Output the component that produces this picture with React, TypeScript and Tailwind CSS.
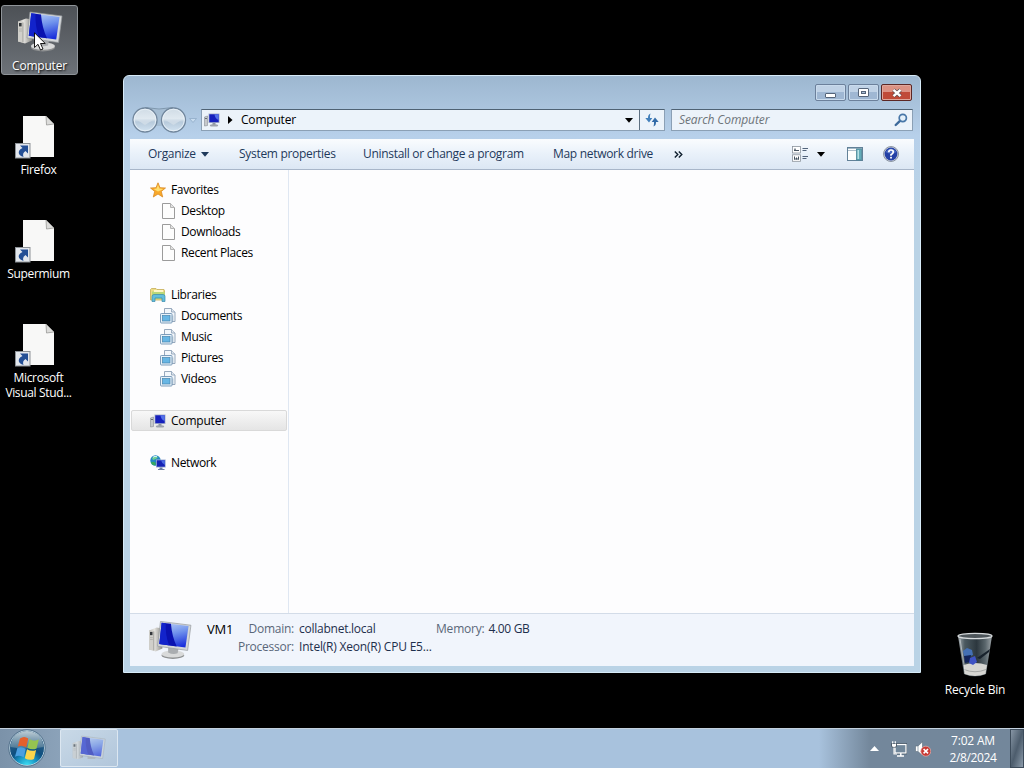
import React from "react";
import clsx from "clsx";

type IconProps = { className?: string };

function ComputerLarge({ className }: IconProps) {
  return (
    <svg viewBox="0 0 46 42" className={className}>
      <defs>
        <linearGradient id="sheen" x1=".3" y1="0" x2=".6" y2="1">
          <stop offset="0" stopColor="#b4cbf6" />
          <stop offset=".45" stopColor="#6f92ec" />
          <stop offset="1" stopColor="#1a2fdc" />
        </linearGradient>
        <linearGradient id="tower" x1="0" y1="0" x2="1" y2="0">
          <stop offset="0" stopColor="#b9b8b2" />
          <stop offset=".4" stopColor="#e4e3df" />
          <stop offset="1" stopColor="#8c8c88" />
        </linearGradient>
      </defs>
      <path d="M1 11 L9 8 L15 9 L15 30 L8 33 L1 31 Z" fill="url(#tower)" />
      <path d="M1 11 L6 12 L6 32 L1 31 Z" fill="#d0cfca" />
      <path d="M6 12 L6 32" stroke="#8b8b87" strokeWidth=".7" />
      <rect x="2" y="12.5" width="2.6" height="3.4" fill="#33373b" />
      <path d="M2 18.5h3M2 20.5h3" stroke="#a5a49f" strokeWidth=".7" />
      <ellipse cx="26" cy="37" rx="12" ry="3.9" fill="#8f9192" />
      <ellipse cx="26" cy="35.6" rx="12" ry="3.7" fill="#d9dada" />
      <path d="M21 28 L32 30 L31 35 Q26 37 21 34 Z" fill="#aaadb0" />
      <path d="M13 1.5 L45 5.5 L41.5 32 L10 27.5 Z" fill="#d4d7d9" stroke="#92979b" strokeWidth=".7" />
      <path d="M14.200 2.800 L42.500 6.400 L39.200 29 L11.800 25.200 Z" fill="url(#sheen)" />
      <path d="M14.200 2.800 L24 4 Q25 17 30 27.700 L11.800 25.200 Z" fill="#0a12b0" />
      <path d="M14.200 2.800 L18.500 3.300 Q18 16 22 26.600 L11.800 25.200 Z" fill="#1428d2" opacity=".8" />
    </svg>
  );
}

function ComputerSmall({ className }: IconProps) {
  return (
    <svg viewBox="0 0 16 16" className={className}>
      <path d="M.5 5 L3.5 4 V13.5 L.5 14 Z" fill="#c5c8cc" stroke="#888e96" strokeWidth=".6" />
      <path d="M1 6.5h2" stroke="#4d545c" strokeWidth=".8" />
      <rect x="4.5" y="1.5" width="11" height="9.5" fill="#a9b3ca" />
      <rect x="5.300" y="2.300" width="9.400" height="7.900" fill="#1620bd" />
      <path d="M10.500 2.300 H14.700 V8 Q11 7 10.500 2.300" fill="#5371e8" />
      <rect x="8.5" y="11" width="3" height="2" fill="#8e96a1" />
      <ellipse cx="10" cy="13.4" rx="4.2" ry="1.2" fill="#9da3ac" />
    </svg>
  );
}

function ShortcutFile() {
  return (
    <svg viewBox="0 0 40 44" className="h-[44px] w-[40px]">
      <path d="M8 1 H31 L39 9 V42 H8 Z" fill="#f8f8f7" />
      <path d="M31 1 L39 9 L31.500 10 Z" fill="#dcdcda" stroke="#8f8f8d" strokeWidth=".7" />
      <rect x=".5" y="28.5" width="14.5" height="14.5" fill="#e3e7ed" stroke="#8d9297" />
      <path d="M5 30.5 H13 V38.5 L10.5 36 Q7 38 8.5 42 Q2.5 40 4 36 Q5 33.800 7.500 33 Z" fill="#244f95" />
    </svg>
  );
}

function PageIcon() {
  return (
    <svg viewBox="0 0 16 16" className="h-4 w-4">
      <path d="M2.500 .5 H10.500 L14.500 4.500 V15.500 H2.500 Z" fill="#fdfdfd" stroke="#9b9b9b" />
      <path d="M10.500 .5 V4.500 H14.500" fill="#e2e2e2" stroke="#b4b4b4" />
    </svg>
  );
}

function LibraryItemIcon() {
  return (
    <svg viewBox="0 0 16 16" className="h-4 w-4">
      <path d="M4.500 .5 H11.500 L15 4 V13.500 H4.500 Z" fill="#f3f7fb" stroke="#8c9fb6" strokeWidth=".9" />
      <path d="M11.500 .5 V4 H15" fill="#dfe7ef" stroke="#8c9fb6" strokeWidth=".8" />
      <path d="M12.800 7.500 V13" stroke="#a9bed1" />
      <rect x=".5" y="5.500" width="11.500" height="9.500" rx=".8" fill="#e9f2f9" stroke="#6f93b3" strokeWidth=".9" />
      <rect x="2.500" y="7.500" width="7.500" height="5.500" fill="#67b6e4" stroke="#4685ae" strokeWidth=".7" />
    </svg>
  );
}

function StarIcon() {
  return (
    <svg viewBox="0 0 16 16" className="h-4 w-4">
      <path
        d="M8 .8 L10 5.700 L15.500 6 L11.300 9.400 L12.700 15 L8 12 L3.300 15 L4.700 9.400 L.5 6 L6 5.700 Z"
        fill="#f9a92a"
        stroke="#d98a25"
        strokeWidth=".8"
      />
      <path d="M8 2.500 L9.300 6.500 L13.500 7 L8 9.500 L3.500 7 L6.700 6.500 Z" fill="#ffdf70" />
    </svg>
  );
}

function LibrariesIcon() {
  return (
    <svg viewBox="0 0 16 16" className="h-4 w-4">
      <path d="M.5 2.500 L1.500 1.500 H6 L7 2.500 H14 L14.500 3.500 V13 H.5 Z" fill="#eddc86" stroke="#c5ad58" strokeWidth=".8" />
      <path d="M2 4.500 H11 L15 5.500 V12 H2 Z" fill="#b9d779" />
      <path d="M4 3 H13 V5 H4 Z" fill="#fff6c7" />
      <path d="M2 14.500 V9.500 Q2 7.500 4 7.500 H13 Q15 7.500 15 9.500 V14.500 H12 V11 H5 V14.500 Z" fill="#62bddb" stroke="#398aac" strokeWidth=".7" />
    </svg>
  );
}

function NetworkIcon() {
  return (
    <svg viewBox="0 0 16 16" className="h-4 w-4">
      <circle cx="5.500" cy="5.500" r="5.200" fill="#2488c4" />
      <path d="M2 3 Q5 0 8 2 Q6 5 3 5 Z" fill="#6fcf90" />
      <path d="M2 7 Q5 6 6 9 L5 10.500 Q1 10 1 7 Z" fill="#37a862" />
      <path d="M3 2.200 Q5 .8 7 1.700" stroke="#d9f4fa" fill="none" />
      <rect x="6" y="4.500" width="9.700" height="8" fill="#9fb0d4" />
      <rect x="6.800" y="5.300" width="8.100" height="6.400" fill="#1523b5" />
      <path d="M11 5.300 H14.900 V10 Q12 9 11 5.300" fill="#4a6ae2" />
      <path d="M9.500 12.500 H12.500 V14 H14.500 V15 H8 V14 H9.500 Z" fill="#6c80a5" />
    </svg>
  );
}

function Caret({ className }: IconProps) {
  return (
    <svg viewBox="0 0 8 5" className={clsx("h-[5px] w-2", className)}>
      <path d="M0 0 H8 L4 4.800 Z" fill="currentColor" />
    </svg>
  );
}

function NavButtons() {
  return (
    <svg viewBox="0 0 66 28" className="h-7 w-[66px]">
      <defs>
        <linearGradient id="navBtn" x1="0" y1="0" x2="0" y2="1">
          <stop offset="0" stopColor="#cfdbe5" />
          <stop offset=".45" stopColor="#e0e9f0" />
          <stop offset=".58" stopColor="#b7cadb" />
          <stop offset="1" stopColor="#d3e4f2" />
        </linearGradient>
      </defs>
      <path d="M13 1.500 Q27 5 41 1.500 L48 22 Q41 26 34 20 H20 Q13 26 6 22 Z" fill="#a5bdd3" />
      <path d="M13 1.500 Q27 4.500 41 1.500" fill="none" stroke="#8098ae" />
      <circle cx="13" cy="14" r="12" fill="url(#navBtn)" stroke="#71869c" strokeWidth="1.300" />
      <circle cx="13" cy="14" r="10.800" fill="none" stroke="#e9f1f7" strokeWidth=".9" />
      <circle cx="41.500" cy="14" r="12" fill="url(#navBtn)" stroke="#71869c" strokeWidth="1.300" />
      <circle cx="41.500" cy="14" r="10.800" fill="none" stroke="#e9f1f7" strokeWidth=".9" />
      <path d="M5 14 H21 L13 19 Z" fill="#d3dfe9" opacity=".8" />
      <path d="M33.500 14 H49.500 L41.500 19 Z" fill="#d3dfe9" opacity=".8" />
      <path d="M57.500 12.500 H64.500 L61 16.500 Z" fill="#c8dcef" stroke="#8fabc7" strokeWidth=".8" />
    </svg>
  );
}

function RefreshIcon() {
  return (
    <svg viewBox="0 0 14 14" className="h-[14px] w-[14px]">
      <path d="M5.500 .5 Q2.800 1.500 3 5 H.3 L4 9.500 L7.300 5 H5 Q4.800 2.500 5.500 .5 Z" fill="#4380bb" />
      <path d="M8.500 13.500 Q11.200 12.500 11 9 H13.700 L10 4.500 L6.700 9 H9 Q9.200 11.500 8.500 13.500 Z" fill="#326ba8" />
    </svg>
  );
}

function SearchIcon() {
  return (
    <svg viewBox="0 0 14 14" className="h-[14px] w-[14px]">
      <path d="M1.700 12 L6 7.800" stroke="#3d6a9b" strokeWidth="2.400" strokeLinecap="round" />
      <circle cx="8.800" cy="5" r="3.600" fill="#e4f0fa" stroke="#4877a8" strokeWidth="1.700" />
    </svg>
  );
}

function ViewIcon() {
  return (
    <svg viewBox="0 0 16 16" className="h-4 w-4">
      <rect x=".5" y=".5" width="8" height="6.500" fill="#fff" stroke="#8c939c" strokeWidth=".8" />
      <rect x=".5" y="8.800" width="8" height="6.500" fill="#fff" stroke="#8c939c" strokeWidth=".8" />
      <path d="M2 4.500 H7 M2 3.200 H4" stroke="#43505e" />
      <path d="M2.500 10.500 V13.500 M4.500 11.500 V13.500 M6.500 10.500 V13.500 M2 13 H7" stroke="#43505e" />
      <path d="M10.500 2.500 H16 M10.500 4.500 H14.500 M10.500 10.500 H16 M10.500 12.500 H14.500" stroke="#52637a" />
    </svg>
  );
}

function PreviewIcon() {
  return (
    <svg viewBox="0 0 16 14" className="h-[14px] w-4">
      <rect x=".5" y=".5" width="15" height="13" fill="#fdfefe" stroke="#628198" />
      <path d="M1 1.500 H15" stroke="#a5bac8" />
      <path d="M1 3.500 H9" stroke="#8ca4b6" strokeWidth=".7" />
      <rect x="9.500" y="2" width="5" height="11" fill="#63abb9" stroke="#4a8597" strokeWidth=".8" />
      <rect x="10.500" y="3" width="1.500" height="9" fill="#b8e2e6" />
    </svg>
  );
}

function HelpIcon() {
  return (
    <svg viewBox="0 0 16 16" className="h-4 w-4">
      <circle cx="8" cy="8" r="7.500" fill="#cdd3de" stroke="#76808f" strokeWidth=".8" />
      <circle cx="8" cy="8" r="6.400" fill="#2440a5" />
      <path d="M2.500 6 Q8 -1 13.500 6 Q8 9 2.500 6" fill="#6b8cda" opacity=".6" />
      <path d="M5.800 6.200 Q5.800 4 8 4 Q10.300 4 10.300 6 Q10.300 7.200 8 8.800 V9.800" fill="none" stroke="#fff" strokeWidth="1.700" />
      <rect x="7.100" y="10.800" width="1.800" height="1.700" fill="#fff" />
    </svg>
  );
}

function StartOrb() {
  return (
    <svg viewBox="0 0 40 38" className="h-[38px] w-10">
      <defs>
        <radialGradient id="orb" cx=".5" cy="1" r=".95">
          <stop offset="0" stopColor="#3fe0f4" />
          <stop offset=".3" stopColor="#1793c2" />
          <stop offset=".52" stopColor="#0d4f80" />
          <stop offset="1" stopColor="#3d6587" />
        </radialGradient>
        <linearGradient id="orbTop" x1="0" y1="0" x2="0" y2="1">
          <stop offset="0" stopColor="#ccd9df" stopOpacity=".9" />
          <stop offset="1" stopColor="#6d91a6" stopOpacity=".6" />
        </linearGradient>
      </defs>
      <circle cx="20" cy="19" r="17.500" fill="url(#orb)" stroke="#c3dbe8" strokeWidth="1" />
      <circle cx="20" cy="19" r="18.200" fill="none" stroke="#40617d" strokeWidth=".7" />
      <path d="M3.500 18 Q5 3 20 2 Q35 3 36.500 18 Q20 21 3.500 18 Z" fill="url(#orbTop)" />
      <path d="M13 9.500 Q17 6.500 21.300 9.500 L19.200 18.300 Q15 15.500 10.800 17.500 Z" fill="#e5602c" />
      <path d="M22.500 10 Q27 13 31.800 10.500 L29.500 19.500 Q25 21.500 20.400 18.800 Z" fill="#95c350" />
      <path d="M10.400 19 Q14.500 17 18.800 19.800 L16.700 28.300 Q12.500 25.500 8 27.800 Z" fill="#4b9fe0" />
      <path d="M20 20.300 Q24.500 23 29.100 21 L27 30 Q22.500 32 17.800 29.300 Z" fill="#fbd54c" />
    </svg>
  );
}

function RecycleBinIcon() {
  return (
    <svg viewBox="0 0 40 48" className="h-12 w-10">
      <defs>
        <linearGradient id="bin" x1="0" y1="0" x2="1" y2="0">
          <stop offset="0" stopColor="#a4abaf" />
          <stop offset=".2" stopColor="#4b5960" />
          <stop offset=".55" stopColor="#2c373e" />
          <stop offset=".8" stopColor="#59656b" />
          <stop offset="1" stopColor="#9ca3a7" />
        </linearGradient>
      </defs>
      <path d="M3 5 L9 43 Q20 48 31 43 L37 5 Z" fill="url(#bin)" />
      <path d="M8.500 34 Q20 30 32 34 L30.500 43 Q20 47 9.500 43 Z" fill="#d6d6d2" />
      <path d="M9 38.500 Q20 43 31 38.500" fill="none" stroke="#a5a7a5" />
      <path d="M8 20 L12 17 L17 19 L18 24 L13 26 L9 25 Z" fill="#4470b4" />
      <path d="M9 25 L16 24 L15 31 L10 32 Z" fill="#13245a" />
      <path d="M15 27 L20 25 L22 31 L18 34 L14 32 Z" fill="#3f53c4" />
      <path d="M22 27 L35 18 L34 21 L25 28 Z" fill="#18222c" />
      <ellipse cx="20" cy="5" rx="17" ry="2.600" fill="#4e565b" stroke="#d7dbdd" strokeWidth="1.300" />
      <path d="M5 8 L10 40" stroke="#dfe3e5" strokeWidth=".8" opacity=".7" />
    </svg>
  );
}

function TrayNetworkIcon() {
  return (
    <svg viewBox="0 0 16 16" className="h-4 w-4">
      <rect x="4" y="3.500" width="11" height="8.500" fill="#5f7488" stroke="#273746" strokeWidth="2.400" />
      <rect x="4" y="3.500" width="11" height="8.500" fill="#71879a" stroke="#fff" strokeWidth="1.300" />
      <path d="M6 15 H13 M9.800 12 V15" stroke="#fff" strokeWidth="1.500" />
      <path d="M.5 2.500 H5.500 V5 Q5.500 6.500 3 6.500 Q.5 6.500 .5 5 Z" fill="#fff" stroke="#2d3e4e" strokeWidth=".8" />
      <path d="M1.700 2.500 V.3 M4.300 2.500 V.3 M3 6.500 V13 H6" stroke="#fff" fill="none" strokeWidth="1.200" />
    </svg>
  );
}

function TrayVolumeIcon() {
  return (
    <svg viewBox="0 0 16 16" className="h-4 w-4">
      <path d="M.5 5 H3 L7.500 .8 V14.500 L3 10.500 H.5 Z" fill="#fff" stroke="#5b6b7b" strokeWidth=".6" />
      <path d="M3 5 V10.500" stroke="#8795a2" strokeWidth=".8" />
      <circle cx="10.800" cy="10.200" r="5" fill="#c93a34" stroke="#e7b6b2" strokeWidth=".7" />
      <path d="M8.600 8 L13 12.400 M13 8 L8.600 12.400" stroke="#fff" strokeWidth="1.600" />
    </svg>
  );
}

const shortcuts = [["Firefox"], ["Supermium"], ["Microsoft", "Visual Stud..."]];

const favorites = ["Desktop", "Downloads", "Recent Places"];
const libraries = ["Documents", "Music", "Pictures", "Videos"];

const commands = [
  { label: "System properties", className: "w-[124px]" },
  { label: "Uninstall or change a program", className: "w-[190px]" },
  { label: "Map network drive", className: "w-[121px]" },
];

function DesktopIcons() {
  return (
    <div className="flex w-[78px] flex-col pt-[5px] pl-px text-center text-white">
      <div className="relative mb-[34px] flex h-[70px] flex-col items-center rounded-[3px] border border-[#8f9499] bg-gradient-to-b from-[#4d5156] to-[#6d7278] pt-[4px]">
        <ComputerLarge className="h-[43px] w-[46px]" />
        <span className="mt-[5px] leading-[15px] [text-shadow:1px_1px_2px_#000]">Computer</span>
        <svg viewBox="0 0 12 19" className="absolute top-[26px] left-[32px] h-[19px] w-3">
          <path
            d="M.5 .8 V15.500 L4 12.300 L6.500 18 L9 17 L6.500 11.500 H11.300 Z"
            fill="#fff"
            stroke="#000"
            strokeWidth=".9"
          />
        </svg>
      </div>
      {shortcuts.map((lines) => (
        <div key={lines[0]} className="flex h-[104px] flex-col pt-[6px]">
          <div className="pl-[14px]">
            <ShortcutFile />
          </div>
          <div className="mt-[3px] -mr-1 -ml-1.5 leading-[15px] tracking-[-0.35px] whitespace-nowrap">
            {lines.map((line) => (
              <div key={line}>{line}</div>
            ))}
          </div>
        </div>
      ))}
    </div>
  );
}

function CaptionButtons() {
  return (
    <div className="flex gap-[2px]">
      <button className="flex h-[17px] w-[31px] items-center justify-center rounded-[2px] border border-[#6c809b] bg-gradient-to-b from-[#c0d2e6] from-50% to-[#9fb7d3] to-50% ring-1 ring-[#c9dbed] ring-inset">
        <span className="mt-[5px] h-[5px] w-[11px] rounded-[1px] border border-[#56657a] bg-white" />
      </button>
      <button className="flex h-[17px] w-[31px] items-center justify-center rounded-[2px] border border-[#6c809b] bg-gradient-to-b from-[#c0d2e6] from-50% to-[#9fb7d3] to-50% ring-1 ring-[#c9dbed] ring-inset">
        <span className="flex h-[9px] w-[11px] items-center justify-center rounded-[1px] border border-[#56657a] bg-white">
          <span className="h-[3px] w-[5px] border border-[#56657a] bg-[#a9bfd9]" />
        </span>
      </button>
      <button className="flex h-[17px] w-[31px] items-center justify-center rounded-[2px] border border-[#5c2725] bg-gradient-to-b from-[#dc9284] from-50% to-[#c04a38] to-50% ring-1 ring-[#dfa79c] ring-inset">
        <svg viewBox="0 0 12 10" className="h-[10px] w-3">
          <path d="M2.500 1.800 L9.500 8.200 M9.500 1.800 L2.500 8.200" stroke="#5b4a50" strokeWidth="3.800" />
          <path d="M2.500 1.800 L9.500 8.200 M9.500 1.800 L2.500 8.200" stroke="#fff" strokeWidth="2.500" />
        </svg>
      </button>
    </div>
  );
}

function NavHeader({ icon, label }: { icon: React.ReactNode; label: string }) {
  return (
    <div className="flex h-[21px] items-center gap-[5px] pl-[20px]">
      {icon}
      <span>{label}</span>
    </div>
  );
}

function NavItem({ icon, label }: { icon: React.ReactNode; label: string }) {
  return (
    <div className="flex h-[21px] items-center gap-[5px] pl-[30px]">
      {icon}
      <span>{label}</span>
    </div>
  );
}

function NavigationPane() {
  return (
    <nav className="w-[159px] shrink-0 border-r border-[#dfe7f2] pt-[9px] tracking-[-0.35px]">
      <NavHeader icon={<StarIcon />} label="Favorites" />
      {favorites.map((name) => (
        <NavItem key={name} icon={<PageIcon />} label={name} />
      ))}
      <div className="mt-[21px]">
        <NavHeader icon={<LibrariesIcon />} label="Libraries" />
        {libraries.map((name) => (
          <NavItem key={name} icon={<LibraryItemIcon />} label={name} />
        ))}
      </div>
      <div className="mt-[21px] mr-px ml-px flex h-[21px] items-center gap-[5px] rounded-[2px] border border-[#d9d9d9] bg-gradient-to-b from-[#f8f8f8] to-[#e5e5e5] pl-[18px] tracking-[-0.2px]">
        <ComputerSmall className="h-4 w-4" />
        <span>Computer</span>
      </div>
      <div className="mt-[21px]">
        <NavHeader icon={<NetworkIcon />} label="Network" />
      </div>
    </nav>
  );
}

function ExplorerWindow() {
  return (
    <div className="absolute top-[75px] left-[123px] flex h-[598px] w-[798px] flex-col rounded-t-[6px] border border-[#d7ebf8] bg-gradient-to-b from-[#9db7d0] via-[#b7d0ea] via-[60px] to-[#bad3e6] to-[130px] px-[6px] pb-[6px]">
      <div className="flex h-[30px] justify-end pt-[8px] pr-[2px]">
        <CaptionButtons />
      </div>
      <div className="flex h-[33px] items-start pl-[2px]">
        <NavButtons />
        <div className="mt-[3px] ml-[3px] flex h-[22px] w-[464px] border border-[#8ba0b5] border-t-[#4f6274] bg-[#ecf3fa]">
          <div className="flex flex-1 items-center pl-[2px]">
            <ComputerSmall className="h-4 w-4" />
            <svg viewBox="0 0 5 8" className="ml-[8px] h-2 w-[5px]">
              <path d="M0 0 L4.500 4 L0 8 Z" fill="#000" />
            </svg>
            <span className="ml-[8px]">Computer</span>
            <Caret className="mr-[6px] ml-auto" />
          </div>
          <div className="flex w-[25px] items-center justify-center border-l border-[#5d7082]">
            <RefreshIcon />
          </div>
        </div>
        <div className="mt-[3px] ml-[6px] flex h-[22px] w-[242px] items-center justify-between border border-[#8ba0b5] border-t-[#4f6274] bg-[#ecf3fa] pr-[4px] pl-[7px]">
          <span className="tracking-[-0.1px] text-[#6d7479] italic">Search Computer</span>
          <SearchIcon />
        </div>
      </div>

      <div className="flex min-h-0 flex-1 flex-col">
        <div className="flex h-[31px] shrink-0 items-center border-b border-[#a8b6c9] bg-gradient-to-b from-[#fafcfe] via-[#e9f1fa] via-50% to-[#dce7f4] pl-[18px] tracking-[-0.3px] text-[#1e395b]">
          <div className="flex w-[91px] items-center gap-[5px]">
            <span>Organize</span>
            <Caret />
          </div>
          {commands.map((command) => (
            <div key={command.label} className={clsx("shrink-0 whitespace-nowrap", command.className)}>
              {command.label}
            </div>
          ))}
          <svg viewBox="0 0 9 7" className="h-[7px] w-[9px] text-[#10202f]">
            <path d="M.8 .5 L3.800 3.500 L.8 6.500 M4.800 .5 L7.800 3.500 L4.800 6.500" fill="none" stroke="currentColor" strokeWidth="1.400" />
          </svg>
          <div className="ml-auto flex items-center pr-[15px]">
            <ViewIcon />
            <Caret className="ml-[9px] text-black" />
            <span className="ml-[22px]">
              <PreviewIcon />
            </span>
            <span className="ml-[20px]">
              <HelpIcon />
            </span>
          </div>
        </div>

        <div className="flex min-h-0 flex-1 bg-[#fdfdfe]">
          <NavigationPane />
          <main className="flex-1" />
        </div>

        <div className="flex h-[53px] shrink-0 items-start border-t border-[#d3dce8] bg-[#f1f5fc] pl-[18px] leading-[18px] tracking-[-0.25px]">
          <ComputerLarge className="mt-[6px] h-[40px] w-[44px]" />
          <div className="mt-[6px] ml-[15px] w-[33px] text-[13px] tracking-[-0.2px]">VM1</div>
          <div className="mt-[6px] grid w-[196px] grid-cols-[54px_1fr] gap-x-[5px] whitespace-nowrap text-[#1e2f4c]">
            <span className="flex justify-end text-[#5a6779]">Domain:</span>
            <span>collabnet.local</span>
            <span className="flex justify-end text-[#5a6779]">Processor:</span>
            <span className="tracking-[-0.2px]">Intel(R) Xeon(R) CPU E5...</span>
          </div>
          <div className="mt-[6px] flex gap-[4px] tracking-[-0.35px] text-[#1e2f4c]">
            <span className="text-[#5a6779] tracking-[-0.2px]">Memory:</span>
            <span>4.00 GB</span>
          </div>
        </div>
      </div>
    </div>
  );
}

function Taskbar() {
  return (
    <footer className="mt-auto flex h-10 border-t border-[#c3d1de] bg-[#a8c2dd]">
      <div className="flex w-[60px] justify-center bg-gradient-to-r from-[#7b92a9] to-[#8ba2b9] pr-[6px]">
        <StartOrb />
      </div>
      <div className="flex h-[38px] w-[58px] justify-center rounded-[2px] border border-[#dce7f1] bg-gradient-to-br from-[#c9d9e7] to-[#b1c6db] pt-[5px]">
        <div className="h-[24px] overflow-hidden">
          <ComputerLarge className="h-[31px] w-[34px] opacity-60" />
        </div>
      </div>
      <div className="ml-auto flex w-[205px] items-center bg-gradient-to-r from-[#a8c2dd] to-[#73879b] to-25% text-white">
        <svg viewBox="0 0 9 5" className="ml-[51px] h-[5px] w-[9px]">
          <path d="M0 5 L4.500 0 L9 5 Z" fill="#fff" />
        </svg>
        <span className="ml-[12px]">
          <TrayNetworkIcon />
        </span>
        <span className="ml-[8px]">
          <TrayVolumeIcon />
        </span>
        <div className="mr-[5px] ml-auto w-[64px] pt-px text-center leading-[17px] tracking-[-0.4px] whitespace-nowrap">
          <div className="tracking-[-0.2px]">7:02 AM</div>
          <div>2/8/2024</div>
        </div>
        <div className="h-[39px] w-[14px] border border-[#3c4b5a] bg-gradient-to-br from-[#8796a5] via-[#4d5d6d] to-[#8d9cab]" />
      </div>
    </footer>
  );
}

export default function App() {
  return (
    <div className="relative flex h-[768px] w-[1024px] flex-col overflow-hidden bg-black font-['Open_Sans','Noto_Sans',sans-serif] text-[12px] leading-[16px] tracking-[-0.2px] text-black">
      <DesktopIcons />
      <ExplorerWindow />
      <div className="absolute top-[631px] left-[935px] flex w-20 flex-col items-center text-white">
        <RecycleBinIcon />
        <span className="mt-[3px]">Recycle Bin</span>
      </div>
      <Taskbar />
    </div>
  );
}
